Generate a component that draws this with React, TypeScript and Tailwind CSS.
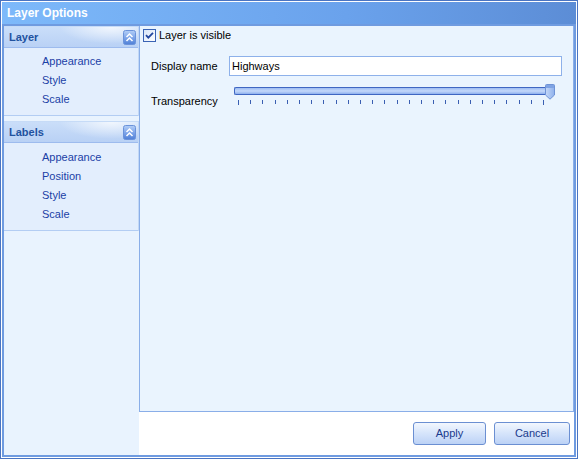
import React from "react";

const font = { fontFamily: '"Liberation Sans", Arial, sans-serif' };

function CollapseBtn() {
  return (
    <svg width="13" height="15" viewBox="0 0 13 15" className="mr-[2px]">
      <defs>
        <linearGradient id="cb" x1="0" y1="0" x2="0" y2="1">
          <stop offset="0" stopColor="#b4cff7" />
          <stop offset="0.5" stopColor="#7fa6ea" />
          <stop offset="1" stopColor="#4f7fd6" />
        </linearGradient>
      </defs>
      <rect x="0.5" y="0.5" width="12" height="14" rx="2" fill="url(#cb)" stroke="#6a92da" />
      <path d="M3.5 7 L6.5 4 L9.5 7" fill="none" stroke="#fff" strokeWidth="1.5" />
      <path d="M3.5 11 L6.5 8 L9.5 11" fill="none" stroke="#fff" strokeWidth="1.5" />
    </svg>
  );
}

function Panel({ title, items, pt, pb }: { title: string; items: string[]; pt: number; pb: number }) {
  return (
    <div className="flex flex-col border-r border-[#c3d8f6]">
      <div className="h-[22px] flex items-center justify-between pl-[5px] border-t border-[#c6dbf7] border-b border-b-[#9dbbee] bg-[radial-gradient(ellipse_55%_120%_at_80%_0%,rgba(255,255,255,0.75),transparent_70%),linear-gradient(180deg,#cadef9,#b9d1f5)]">
        <span className="text-[11px] font-bold text-[#22529f] leading-none">{title}</span>
        <CollapseBtn />
      </div>
      <div className="flex flex-col bg-[#e3eefd] border-b border-[#b3cdf3]" style={{ paddingTop: pt, paddingBottom: pb }}>
        {items.map((t) => (
          <div key={t} className="h-[19px] leading-[19px] pl-[38px] text-[11px] text-[#1b3fa6]">
            {t}
          </div>
        ))}
      </div>
    </div>
  );
}

function Checkbox() {
  return (
    <svg width="13" height="13" viewBox="0 0 13 13">
      <defs>
        <linearGradient id="ck" x1="0" y1="0" x2="1" y2="1">
          <stop offset="0" stopColor="#d6e4f8" />
          <stop offset="1" stopColor="#ffffff" />
        </linearGradient>
      </defs>
      <rect x="0.5" y="0.5" width="12" height="12" fill="url(#ck)" stroke="#3a63b4" />
      <path d="M3 6.2 L5.3 8.6 L10 3.8" fill="none" stroke="#22469e" strokeWidth="1.8" />
    </svg>
  );
}

function Slider() {
  const ticks = Array.from({ length: 26 }, (_, i) => i);
  return (
    <div className="relative w-[322px] h-[22px] ml-[5px]">
      <div className="absolute left-0 top-[3px] w-[313px] h-[8px] rounded-l-[2px] border-y border-[#3f66c2] border-l bg-[linear-gradient(180deg,#9dbcf2,#c4d8fa_50%,#8eb0ee)]" />
      <svg className="absolute left-[311px] top-0" width="11" height="16" viewBox="0 0 11 16">
        <defs>
          <linearGradient id="th" x1="0" y1="0" x2="1" y2="0">
            <stop offset="0" stopColor="#c5d8f8" />
            <stop offset="1" stopColor="#8fb1ec" />
          </linearGradient>
        </defs>
        <path d="M0.5 1.5 Q0.5 0.5 1.5 0.5 L8.5 0.5 Q9.5 0.5 9.5 1.5 L9.5 11 L5 15.2 L0.5 11 Z" fill="url(#th)" stroke="#6f93d6" />
        <rect x="1" y="1" width="8" height="3" fill="#7fa3e4" />
      </svg>
      {ticks.map((i) => (
        <div
          key={i}
          className="absolute w-px bg-[#3a5fb2]"
          style={{ left: 4 + Math.round(i * 12.2), top: 16, height: i === 0 || i === 25 ? 5 : 4 }}
        />
      ))}
    </div>
  );
}

function Btn({ label, w }: { label: string; w: string }) {
  return (
    <button
      className={`${w} h-[23px] rounded-[3px] border border-[#6b8fd2] bg-[linear-gradient(180deg,#f3f7fe,#d8e6fb_45%,#bcd2f6)] text-[11px] text-[#1a3a8c] flex items-center justify-center`}
    >
      {label}
    </button>
  );
}

export default function App() {
  return (
    <div style={font} className="w-[578px] h-[459px] border border-[#4a74c2] bg-white">
      <div className="w-full h-full border border-white bg-[#6f9be0] flex flex-col">
        <div className="h-[22px] flex items-center pl-[5px] bg-[linear-gradient(90deg,#7db9fa,#6aa2ec_60%,#5c8dd6)]">
          <span className="text-white font-bold text-[12px] leading-none">Layer Options</span>
        </div>
        <div className="flex-1 flex mx-[2px] mb-[2px] mt-[2px] min-h-0">
          <div className="w-[135px] bg-[#e9f3fe] flex flex-col">
            <Panel title="Layer" items={["Appearance", "Style", "Scale"]} pt={4} pb={6} />
            <div className="h-[5px]" />
            <Panel title="Labels" items={["Appearance", "Position", "Style", "Scale"]} pt={5} pb={6} />
          </div>
          <div className="flex-1 flex flex-col bg-white">
            <div className="flex-1 border-l border-b border-r border-[#8aaee8] bg-[#eaf4fe] flex flex-col">
              <div className="flex items-center gap-[3px] ml-[3px] mt-[3px] h-[13px]">
                <Checkbox />
                <span className="text-[11px] text-black">Layer is visible</span>
              </div>
              <div className="flex items-center mt-[14px] pl-[11px] pr-[11px]">
                <span className="w-[78px] text-[11px] text-black">Display name</span>
                <div className="flex-1 h-[20px] border border-[#8eb1ea] bg-white flex items-center pl-[2px] text-[11px] text-black">
                  Highways
                </div>
              </div>
              <div className="flex items-start mt-[8px] pl-[11px]">
                <span className="w-[78px] text-[11px] text-black mt-[11px] leading-[13px]">Transparency</span>
                <Slider />
              </div>
            </div>
            <div className="h-[43px] flex items-start justify-end gap-[8px] pt-[10px] pr-[4px]">
              <Btn label="Apply" w="w-[73px]" />
              <Btn label="Cancel" w="w-[76px]" />
            </div>
          </div>
        </div>
      </div>
    </div>
  );
}
